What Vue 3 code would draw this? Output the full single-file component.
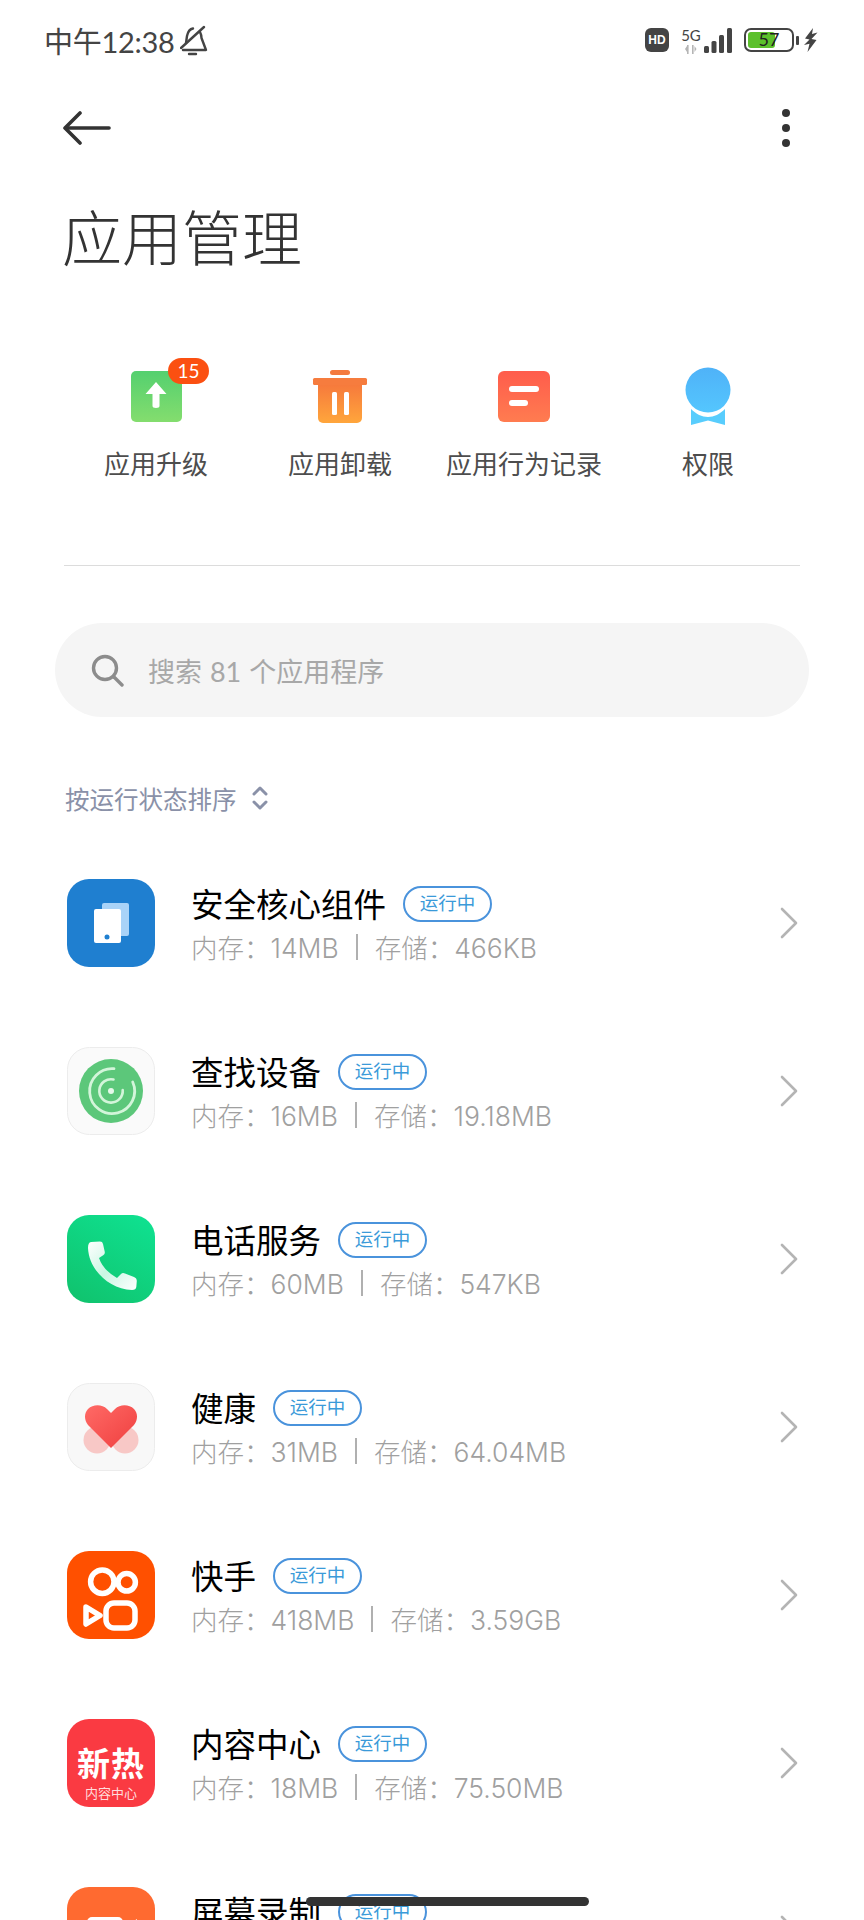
<template>
  <div class="page">
    <div class="status-bar">
      <div class="status-left">
        <span class="time">中午12:38</span>
        <svg class="bell" width="28" height="32" viewBox="0 0 28 32" fill="none" stroke="#444" stroke-width="2.400" stroke-linecap="round" stroke-linejoin="round">
          <path d="M6 19L7 12C8 7 10 5 13 4.500" />
          <path d="M20 8C21 10 21.500 12 21.500 14L26 26H3" />
          <path d="M9 30h7" />
          <path d="M1 24L24 3" />
        </svg>
      </div>
      <div class="status-right">
        <span class="hd">HD</span>
        <div class="net">
          <span class="net-label">5G</span>
          <svg class="net-arrows" width="12" height="9" viewBox="0 0 12 9" fill="#b5b5b5">
            <rect x="2" y="0" width="1.600" height="9" />
            <rect x="7" y="0" width="1.600" height="9" />
            <path d="M0 4l2-3v6zM11.500 4l-2-3v6z" />
          </svg>
        </div>
        <svg class="signal" width="32" height="26" viewBox="0 0 32 26" fill="#444">
          <rect x="0" y="19" width="5" height="7" rx="1.500" />
          <rect x="7.500" y="14" width="5" height="12" rx="1.500" />
          <rect x="15" y="8" width="5" height="18" rx="1.500" />
          <rect x="23" y="1" width="5" height="25" rx="1.500" />
        </svg>
        <div class="battery">
          <div class="battery-fill"></div>
          <span class="battery-text">57</span>
        </div>
        <span class="battery-cap"></span>
        <svg class="bolt" width="14" height="24" viewBox="0 0 14 24" fill="#444">
          <path d="M9 0L1 10.500l4.500 1L0 17l5.500-1.200L3.500 24l9-12-5-1 6-6.500-5.500 1.500z" />
        </svg>
      </div>
    </div>

    <div class="nav">
      <svg width="48" height="36" viewBox="0 0 48 36" fill="none" stroke="#333" stroke-width="3.600" stroke-linecap="round" stroke-linejoin="round">
        <path d="M46 18H3" />
        <path d="M17 3L2 18l15 15" />
      </svg>
      <div class="dots">
        <span></span>
        <span></span>
        <span></span>
      </div>
    </div>

    <h1 class="title">应用管理</h1>

    <div class="actions">
      <div v-for="a in actions" :key="a.key" class="action">
        <div class="action-icon">
          <svg v-if="a.key === 'up'" width="56" height="56" viewBox="0 0 56 56">
            <defs>
              <linearGradient id="gUp" x1="0" y1="0" x2="0" y2="1">
                <stop offset="0" stop-color="#54d06f" />
                <stop offset="1" stop-color="#84dd6e" />
              </linearGradient>
            </defs>
            <rect x="3" y="3" width="51" height="51" rx="5" fill="url(#gUp)" />
            <path d="M28 14L17.500 26h7v12a3.500 2 0 0 0 7 0V26h7z" fill="#fff" />
          </svg>
          <svg v-else-if="a.key === 'del'" width="56" height="56" viewBox="0 0 56 56">
            <defs>
              <linearGradient id="gDel" x1="0" y1="0" x2="0" y2="1">
                <stop offset="0" stop-color="#f67a3c" />
                <stop offset="1" stop-color="#ffa63c" />
              </linearGradient>
            </defs>
            <rect x="18" y="2" width="20" height="5" rx="2.500" fill="#f47a3e" />
            <rect x="1" y="10" width="54" height="7" rx="1.500" fill="#f67c3e" />
            <path d="M6 17h44v33a5 5 0 0 1-5 5H11a5 5 0 0 1-5-5z" fill="url(#gDel)" />
            <rect x="20" y="24" width="5" height="23" rx="1.500" fill="#fff" />
            <rect x="32" y="24" width="5" height="23" rx="1.500" fill="#fff" />
          </svg>
          <svg v-else-if="a.key === 'log'" width="56" height="56" viewBox="0 0 56 56">
            <defs>
              <linearGradient id="gLog" x1="0" y1="0" x2="0" y2="1">
                <stop offset="0" stop-color="#ff5c4c" />
                <stop offset="1" stop-color="#ff7c50" />
              </linearGradient>
            </defs>
            <rect x="2" y="3" width="52" height="51" rx="6" fill="url(#gLog)" />
            <rect x="13" y="18" width="30" height="6" rx="3" fill="#fff" />
            <rect x="13" y="32" width="19" height="6" rx="3" fill="#fff" />
          </svg>
          <svg v-else width="56" height="60" viewBox="0 0 56 60">
            <defs>
              <linearGradient id="gPerm" x1="0" y1="0" x2="0" y2="1">
                <stop offset="0" stop-color="#4fb2f8" />
                <stop offset="1" stop-color="#54c6fe" />
              </linearGradient>
            </defs>
            <path d="M11 43c5 5 11 8 17 8s12-3 17-8v16l-17-4.500L11 59z" fill="#58cdfd" />
            <circle cx="28" cy="24" r="22.500" fill="url(#gPerm)" />
          </svg>
          <span v-if="a.badge" class="badge">{{ a.badge }}</span>
        </div>
        <span class="action-label">{{ a.label }}</span>
      </div>
    </div>

    <div class="divider"></div>

    <div class="search">
      <svg width="34" height="34" viewBox="0 0 34 34" fill="none" stroke="#8c8c8c" stroke-width="3.400" stroke-linecap="round">
        <circle cx="15" cy="15" r="11.500" />
        <path d="M24 24l8 8" />
      </svg>
      <span class="search-text">搜索 81 个应用程序</span>
    </div>

    <div class="sort">
      <span>按运行状态排序</span>
      <svg width="18" height="26" viewBox="0 0 18 26" fill="none" stroke="#8a91a8" stroke-width="3" stroke-linecap="round" stroke-linejoin="round">
        <path d="M3 9l6-6 6 6" />
        <path d="M3 17l6 6 6-6" />
      </svg>
    </div>

    <div class="list">
      <div v-for="app in apps" :key="app.name" class="row">
        <div class="app-icon">
          <svg v-if="app.icon === 'secure'" width="88" height="88" viewBox="0 0 88 88">
            <rect width="88" height="88" rx="22" fill="#1f7fd0" />
            <rect x="35" y="24" width="27" height="33" rx="2" fill="#a9d3f8" />
            <rect x="27" y="30" width="27" height="34" rx="2" fill="#fff" />
            <circle cx="40" cy="58" r="2.500" fill="#1f7fd0" />
          </svg>
          <svg v-else-if="app.icon === 'find'" width="88" height="88" viewBox="0 0 88 88">
            <rect x="0.500" y="0.500" width="87" height="87" rx="22" fill="#fafafa" stroke="#ececec" />
            <circle cx="44" cy="44" r="32" fill="#5cc77a" />
            <g fill="none" stroke="#d3f5da" stroke-linecap="round">
              <path d="M47 21.700A22.500 22.500 0 1 0 65.700 35" stroke-width="2.800" />
              <path d="M46.500 32.500A11.700 11.700 0 1 0 55.700 43" stroke-width="2.600" />
            </g>
            <circle cx="44" cy="44" r="3" fill="#e6f9ea" />
          </svg>
          <svg v-else-if="app.icon === 'phone'" width="88" height="88" viewBox="0 0 88 88">
            <defs>
              <linearGradient id="gPhone" x1="0.800" y1="0" x2="0.200" y2="1">
                <stop offset="0" stop-color="#0fe08f" />
                <stop offset="1" stop-color="#10c46f" />
              </linearGradient>
              <linearGradient id="gHandset" x1="0" y1="0" x2="1" y2="1">
                <stop offset="0" stop-color="#ffffff" />
                <stop offset="0.500" stop-color="#c9f6e3" />
                <stop offset="1" stop-color="#ffffff" />
              </linearGradient>
            </defs>
            <rect width="88" height="88" rx="22" fill="url(#gPhone)" />
            <path d="M24 27L33 26.600Q35.500 26.600 36 29L37.800 37Q38 39 36.500 40L32 43Q36 55 50 63L54 59Q55.500 57.500 58 58.500L67 62Q69.800 63 69.800 66L69.300 72Q69 75 65 75C42 74 22 55 21 33Q21 27.500 24 27Z" fill="url(#gHandset)" />
          </svg>
          <svg v-else-if="app.icon === 'health'" width="88" height="88" viewBox="0 0 88 88">
            <defs>
              <linearGradient id="gHeart" x1="0" y1="0" x2="1" y2="1">
                <stop offset="0" stop-color="#ff6a66" />
                <stop offset="1" stop-color="#ef3f3f" />
              </linearGradient>
            </defs>
            <rect x="0.500" y="0.500" width="87" height="87" rx="22" fill="#f8f8f8" stroke="#ececec" />
            <circle cx="30" cy="57" r="13.500" fill="#f8c8c6" />
            <circle cx="58" cy="57" r="13.500" fill="#f8c8c6" />
            <path d="M44 65L21 42c-4-5-4-12 0-16 5-5 14-5 19 0l4 4 4-4c5-5 14-5 19 0 4 4 4 11 0 16z" fill="url(#gHeart)" />
          </svg>
          <svg v-else-if="app.icon === 'kuaishou'" width="88" height="88" viewBox="0 0 88 88">
            <rect width="88" height="88" rx="22" fill="#ff5000" />
            <g fill="none" stroke="#fff" stroke-width="5.500">
              <circle cx="35.300" cy="30.700" r="11.700" />
              <circle cx="59.700" cy="31.300" r="8.700" />
              <rect x="39" y="52" width="29" height="25" rx="8" />
              <path d="M19 56L33 64.500 19 73z" stroke-linejoin="round" />
            </g>
          </svg>
          <svg v-else-if="app.icon === 'content'" width="88" height="88" viewBox="0 0 88 88">
            <rect width="88" height="88" rx="22" fill="#fa3a42" />
          </svg>
          <svg v-else width="88" height="88" viewBox="0 0 88 88">
            <rect width="88" height="88" rx="22" fill="#ff6a30" />
            <rect x="20" y="30" width="36" height="30" rx="5" fill="#fff" />
            <path d="M58 40l12-8v26l-12-8z" fill="#fff" />
          </svg>
          <div v-if="app.icon === 'content'" class="hot">
            <span class="hot-main">新热</span>
            <span class="hot-sub">内容中心</span>
          </div>
        </div>
        <div class="app-body">
          <div class="app-head">
            <span class="app-name">{{ app.name }}</span>
            <span class="pill">运行中</span>
          </div>
          <div v-if="app.mem" class="app-meta">
            <span>内存：{{ app.mem }}</span>
            <span class="sep"></span>
            <span>存储：{{ app.disk }}</span>
          </div>
        </div>
        <svg class="chevron" width="20" height="34" viewBox="0 0 20 34" fill="none" stroke="#b4b4b4" stroke-width="2.600" stroke-linecap="round" stroke-linejoin="round">
          <path d="M3 3l14 14L3 31" />
        </svg>
      </div>
    </div>

    <div class="home-bar"></div>
  </div>
</template>

<script setup>
const actions = [
  { key: 'up', label: '应用升级', badge: 15 },
  { key: 'del', label: '应用卸载' },
  { key: 'log', label: '应用行为记录' },
  { key: 'perm', label: '权限' },
]

const apps = [
  { icon: 'secure', name: '安全核心组件', mem: '14MB', disk: '466KB' },
  { icon: 'find', name: '查找设备', mem: '16MB', disk: '19.18MB' },
  { icon: 'phone', name: '电话服务', mem: '60MB', disk: '547KB' },
  { icon: 'health', name: '健康', mem: '31MB', disk: '64.04MB' },
  { icon: 'kuaishou', name: '快手', mem: '418MB', disk: '3.59GB' },
  { icon: 'content', name: '内容中心', mem: '18MB', disk: '75.50MB' },
  { icon: 'record', name: '屏幕录制' },
]
</script>

<style>
html,
body {
  margin: 0;
  background: #fff;
}
</style>

<style scoped>
.page {
  position: relative;
  width: 864px;
  height: 1920px;
  overflow: hidden;
  background: #fff;
  font-family: Lato, "Noto Sans CJK SC", sans-serif;
  color: #000;
}

.status-bar {
  display: flex;
  justify-content: space-between;
  align-items: center;
  height: 84px;
  padding: 0 44px 4px;
  box-sizing: border-box;
  color: #444;
}

.status-left {
  display: flex;
  align-items: center;
  gap: 6px;
}

.time {
  font-size: 29px;
  letter-spacing: -0.3px;
}

.status-right {
  display: flex;
  align-items: center;
  margin-right: 2px;
}

.hd {
  width: 24px;
  height: 24px;
  line-height: 24px;
  border-radius: 6px;
  background: #444;
  color: #fff;
  font-size: 12px;
  font-weight: 700;
  text-align: center;
  font-family: "Liberation Sans", sans-serif;
}

.net {
  display: flex;
  flex-direction: column;
  align-items: center;
  margin-left: 11px;
  width: 22px;
}

.net-label {
  font-size: 15px;
  line-height: 17px;
}

.net-arrows {
  margin-top: 1px;
}

.signal {
  margin-left: 2px;
}

.battery {
  position: relative;
  width: 50px;
  height: 24px;
  margin-left: 8px;
  border: 2.500px solid #444;
  border-radius: 7px;
  box-sizing: border-box;
  text-align: center;
}

.battery-fill {
  position: absolute;
  left: 2px;
  top: 2px;
  bottom: 2px;
  width: 27px;
  border-radius: 3px;
  background: #5cc02c;
}

.battery-text {
  position: relative;
  font-size: 18px;
  line-height: 19px;
  display: block;
  color: #222;
}

.battery-cap {
  width: 3px;
  height: 9px;
  margin-left: 2px;
  border-radius: 1px;
  background: #444;
}

.bolt {
  margin-left: 5px;
}

.nav {
  display: flex;
  justify-content: space-between;
  align-items: center;
  height: 88px;
  padding: 0 74px 0 63px;
}

.dots {
  display: flex;
  flex-direction: column;
  gap: 7px;
}

.dots span {
  width: 8px;
  height: 8px;
  border-radius: 50%;
  background: #333;
}

.title {
  margin: 27px 0 0 62px;
  font-size: 60px;
  line-height: 78px;
  font-weight: 300;
  color: #333;
}

.actions {
  display: grid;
  grid-template-columns: repeat(4, 184px);
  padding: 0 64px;
  margin-top: 88px;
}

.action {
  display: flex;
  flex-direction: column;
  align-items: center;
}

.action-icon {
  position: relative;
  height: 62px;
  display: flex;
  align-items: center;
  justify-content: center;
}

.badge {
  position: absolute;
  left: 40px;
  top: -7px;
  width: 41px;
  height: 26px;
  line-height: 26px;
  border-radius: 13px;
  background: #fb5011;
  color: #fff;
  font-size: 19px;
  text-align: center;
}

.action-label {
  margin-top: 19px;
  font-size: 26px;
  line-height: 36px;
  color: #4d4d4d;
  white-space: nowrap;
}

.divider {
  height: 1px;
  margin: 83px 64px 0;
  background: #dcdcdc;
}

.search {
  display: flex;
  align-items: center;
  height: 94px;
  margin: 57px 55px 0;
  padding-left: 35px;
  border-radius: 47px;
  background: #f5f5f5;
}

.search-text {
  margin-left: 24px;
  font-size: 27px;
  word-spacing: 1px;
  color: #a8a8a8;
}

.sort {
  display: flex;
  align-items: center;
  gap: 14px;
  margin: 63px 0 0 65px;
  height: 36px;
  font-size: 24.500px;
  color: #8a91a8;
}

.list {
  margin-top: 63px;
  padding: 0 65px 0 67px;
}

.row {
  display: flex;
  align-items: center;
  height: 88px;
  margin-bottom: 80px;
}

.app-icon {
  position: relative;
  flex: none;
  width: 88px;
  height: 88px;
}

.app-icon svg {
  display: block;
}

.hot {
  position: absolute;
  inset: 0;
  display: flex;
  flex-direction: column;
  align-items: center;
  color: #fff;
}

.hot-main {
  margin-top: 24px;
  font-size: 33px;
  line-height: 38px;
  font-weight: 700;
  letter-spacing: 1px;
  font-family: "Noto Sans CJK SC", sans-serif;
}

.hot-sub {
  margin-top: 4px;
  font-size: 13px;
  line-height: 16px;
  color: #ffdcdc;
}

.app-body {
  flex: 1;
  align-self: flex-start;
  margin-left: 36px;
}

.app-head {
  display: flex;
  align-items: center;
  gap: 17px;
  height: 52px;
}

.app-name {
  font-size: 32.500px;
  line-height: 48px;
  color: #000;
}

.pill {
  width: 89px;
  height: 36px;
  margin-top: -2px;
  box-sizing: border-box;
  border: 2px solid #4a93dc;
  border-radius: 18px;
  color: #3a9ad9;
  font-size: 18.500px;
  line-height: 31px;
  text-align: center;
}

.app-meta {
  display: flex;
  align-items: center;
  height: 31px;
  font-family: Inter, "Noto Sans CJK SC", sans-serif;
  font-size: 26.500px;
  font-weight: 300;
  color: #a0a0a0;
}

.sep {
  width: 2px;
  height: 26px;
  margin: 0 17px;
  background: #b0b0b0;
}

.home-bar {
  position: absolute;
  left: 306px;
  top: 1897px;
  width: 283px;
  height: 9px;
  border-radius: 5px;
  background: #333;
}
</style>
